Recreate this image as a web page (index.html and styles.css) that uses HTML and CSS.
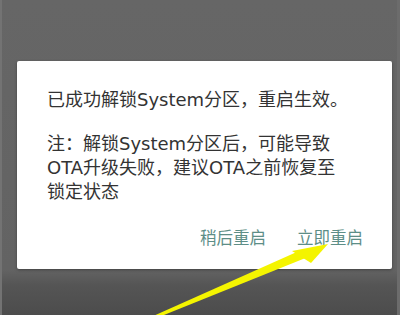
FILE: index.html
```html
<!DOCTYPE html>
<html lang="zh-CN">
<head>
<meta charset="utf-8">
<link rel="stylesheet" href="styles.css">
</head>
<body>
<div class="screen">
  <div class="dialog">
    <p class="msg">已成功解锁System分区，重启生效。</p>
    <p class="msg note">注：解锁System分区后，可能导致OTA升级失败，建议OTA之前恢复至锁定状态</p>
    <div class="actions">
      <span class="btn">稍后重启</span>
      <span class="btn">立即重启</span>
    </div>
  </div>
  <svg class="arrow" width="400" height="315" viewBox="0 0 400 315">
    <polygon points="149,317 157,317 306,257 297,251" fill="#f4f400"/>
    <polygon points="290,251 326,244 309,263" fill="#f4f400"/>
  </svg>
</div>
</body>
</html>
```
FILE: styles.css
```css
html, body {
  margin: 0;
  padding: 0;
}
.screen {
  position: relative;
  width: 400px;
  height: 315px;
  box-sizing: border-box;
  padding: 61px 0 0 15px;
  background: linear-gradient(#666 0, #636363 270px, #555 285px, #4c4c4c 315px);
  border-left: 2px solid #737373;
  border-right: 3px solid #6c6c6c;
  overflow: hidden;
  font-family: Roboto, "Noto Sans CJK SC", sans-serif;
}
.dialog {
  width: 375px;
  height: 208px;
  box-sizing: border-box;
  background: #fff;
  border-radius: 2px;
  box-shadow: 0 1px 3px rgba(0,0,0,0.35);
  padding: 27px 24px 0 30px;
}
.msg {
  margin: 0;
  font-family: "DejaVu Sans", "Noto Sans CJK SC", sans-serif;
  font-size: 18px;
  line-height: 24px;
  color: #333;
}
.note {
  margin-top: 20px;
  width: 300px;
}
.actions {
  display: flex;
  justify-content: flex-end;
  gap: 31px;
  margin-top: 23px;
  padding-right: 5px;
}
.btn {
  font-size: 16.5px;
  line-height: 24px;
  color: #5d8e87;
}
.arrow {
  position: absolute;
  left: 0;
  top: 0;
}
```
